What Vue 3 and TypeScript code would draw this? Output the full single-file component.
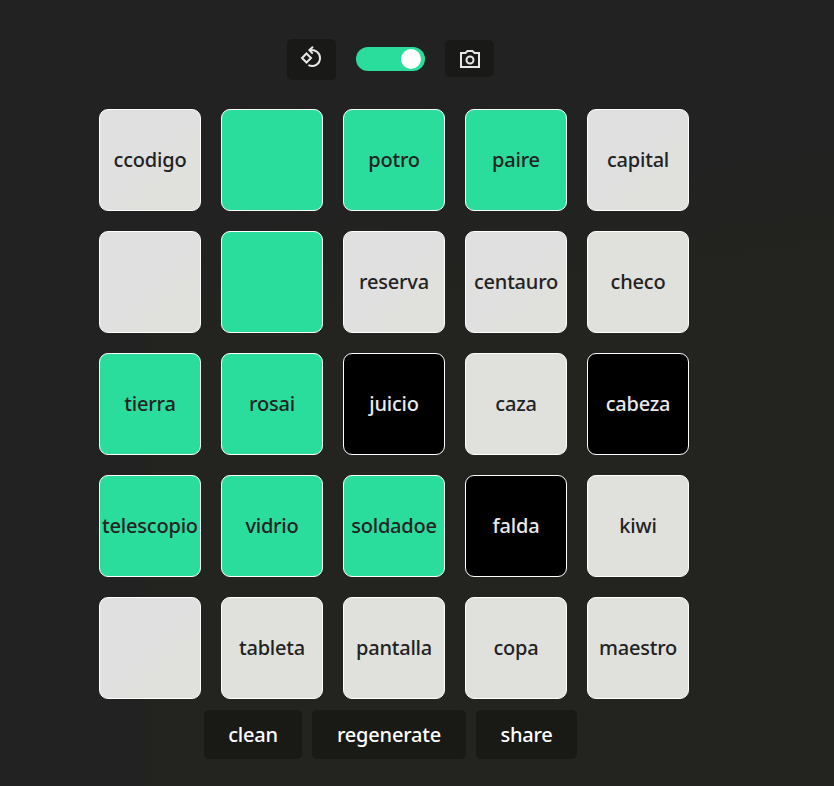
<script setup lang="ts">
import { computed, ref } from 'vue'

type Tone = 'light' | 'mist' | 'green' | 'black'
interface Card { word: string; tone: Tone }

const card = (word: string, tone: Tone = 'light'): Card => ({ word, tone })

const cards = ref<Card[]>([
  card('ccodigo', 'mist'), card('', 'green'), card('potro', 'green'), card('paire', 'green'), card('capital', 'mist'),
  card('', 'mist'), card('', 'green'), card('reserva', 'mist'), card('centauro', 'mist'), card('checo'),
  card('tierra', 'green'), card('rosai', 'green'), card('juicio', 'black'), card('caza'), card('cabeza', 'black'),
  card('telescopio', 'green'), card('vidrio', 'green'), card('soldadoe', 'green'), card('falda', 'black'), card('kiwi'),
  card('', 'mist'), card('tableta'), card('pantalla'), card('copa'), card('maestro'),
])
const enabled = ref(true)
const switchClass = computed(() => ({ on: enabled.value }))
</script>

<template>
  <main class="page">
    <header class="toolbar">
      <button class="icon-button rotate" aria-label="Rotate">
        <svg width="24" height="24" viewBox="0 0 24 24" fill="none" stroke="currentColor" stroke-width="2">
          <path d="M7.500 7.500l4.500 4.500-4.500 4.500L3 12z" />
          <path d="M11 4.100c6-.7 10 3 10 7.900 0 6.200-6 9.600-11.600 7.100" />
          <path d="M14 .8L10.400 4.100l3.300 3.500" />
        </svg>
      </button>
      <button class="switch" :class="switchClass" aria-label="Toggle" @click="enabled = !enabled"><span class="knob" /></button>
      <button class="icon-button camera" aria-label="Camera">
        <svg width="24" height="24" viewBox="0 0 24 24" fill="none" stroke="currentColor" stroke-width="2">
          <path d="M3 6h4.500l2-2h5l2 2H21v14H3z" />
          <circle cx="12" cy="13" r="3.500" />
        </svg>
      </button>
    </header>
    <section class="board">
      <div v-for="(item, i) in cards" :key="i" class="card" :class="item.tone">
        <span>{{ item.word }}</span>
      </div>
    </section>
    <footer class="actions">
      <button class="action clean">clean</button>
      <button class="action regenerate">regenerate</button>
      <button class="action share">share</button>
    </footer>
  </main>
</template>

<style>
body { margin: 0; background: #222220; }
</style>

<style scoped>
.page {
  box-sizing: border-box;
  width: 834px;
  height: 786px;
  padding: 39px 0 0 99px;
  background: linear-gradient(90deg, #222222 140px, transparent 150px), linear-gradient(172deg, #222222 28%, #23241f 42%);
  font-family: "Noto Sans", sans-serif;
  font-size: 20px;
  font-weight: 500;
  letter-spacing: -0.2px;
}
button { border: 0; padding: 0; font: inherit; letter-spacing: inherit; color: #fff; }
.toolbar { display: flex; width: 583px; height: 41px; justify-content: center; align-items: flex-start; gap: 20px; }
.icon-button { box-sizing: border-box; display: flex; align-items: center; justify-content: center; width: 49px; height: 37px; border-radius: 5px; background: #191918; color: #e8e8e8; }
.rotate { height: 41px; padding: 0 1px 3px 0; }
.switch { display: flex; align-items: center; width: 69px; height: 24px; margin-top: 8px; border-radius: 12px; background: #2bdd9d; }
.switch.on { justify-content: flex-end; }
.knob { width: 20px; height: 20px; margin: 0 4px; border-radius: 50%; background: #fff; }
.camera { margin-top: 1px; }
.board { display: grid; grid-template-columns: repeat(5, 102px); grid-auto-rows: 102px; gap: 20px; margin-top: 29px; }
.card { box-sizing: border-box; display: flex; align-items: center; justify-content: center; padding-bottom: 2px; border: 1px solid #fff; border-radius: 9px; background: #e0e0dc; color: #222; }
.mist { background: linear-gradient(135deg, #e0e0e0 50%, #e0e0dc 75%); }
.green { background: #2bdd9d; }
.black { background: #000; color: #e9e9e9; }
.actions { display: flex; width: 583px; justify-content: center; gap: 10px; margin-top: 11px; }
.action { height: 49px; border-radius: 5px; background: #191916; }
.clean { width: 98px; }
.regenerate { width: 154px; }
.share { width: 101px; }
</style>
